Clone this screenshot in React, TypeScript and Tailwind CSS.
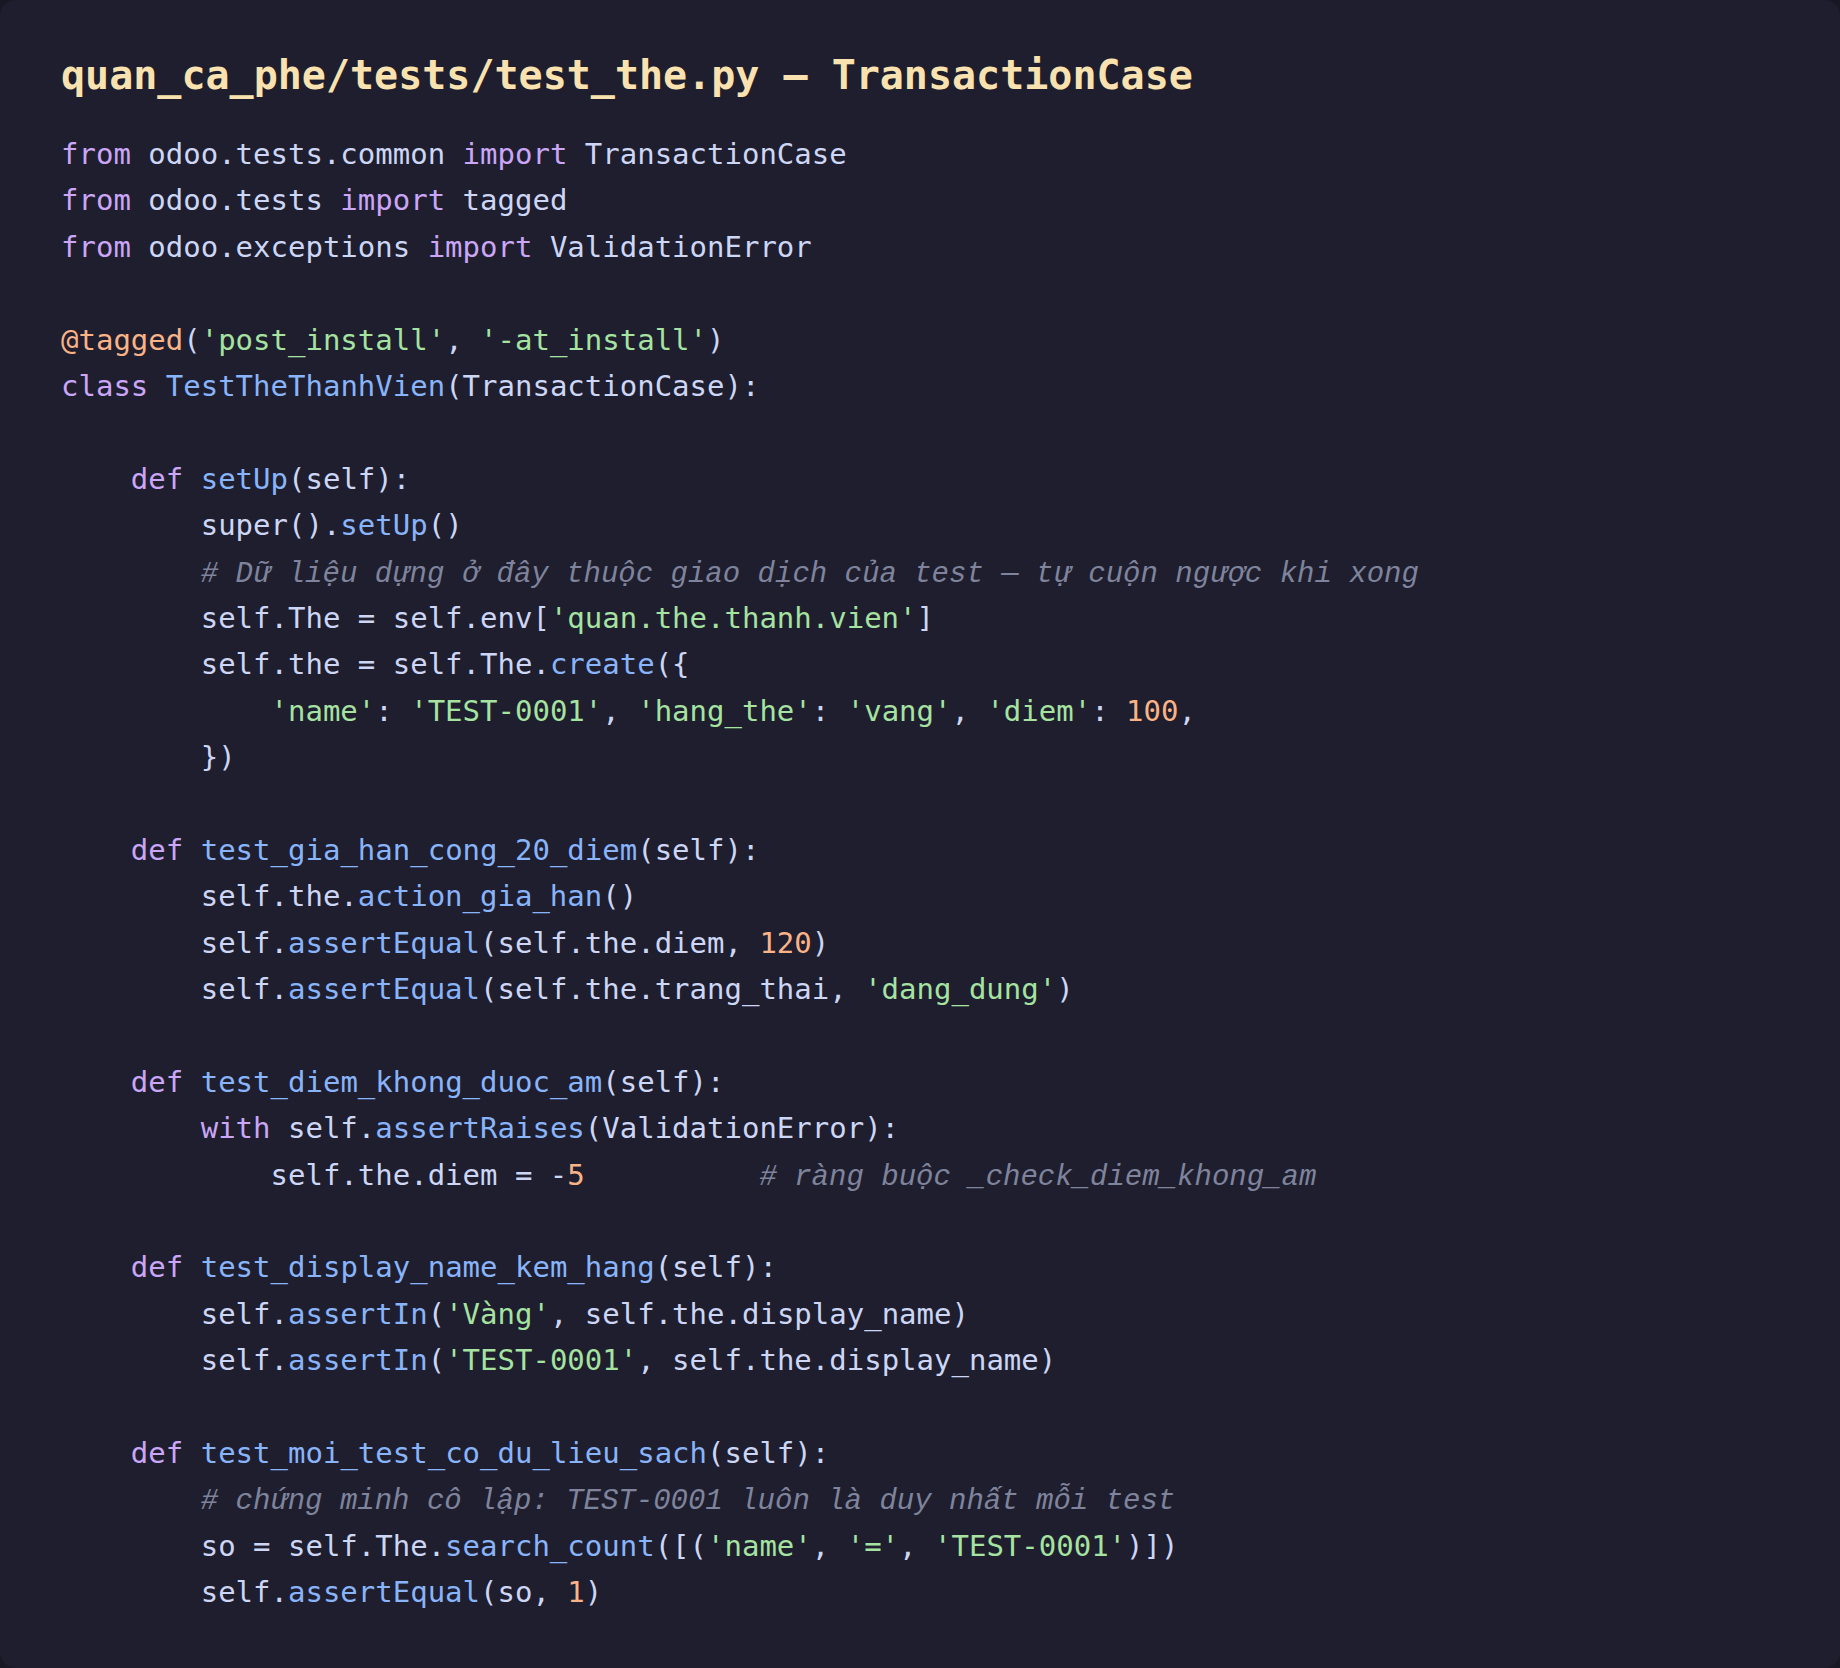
import type { ReactNode } from "react";

const K = ({ children }: { children: ReactNode }) => <span className="text-[#cba6f7]">{children}</span>;
const F = ({ children }: { children: ReactNode }) => <span className="text-[#89b4fa]">{children}</span>;
const S = ({ children }: { children: ReactNode }) => <span className="text-[#a6e3a1]">{children}</span>;
const N = ({ children }: { children: ReactNode }) => <span className="text-[#fab387]">{children}</span>;
const C = ({ children }: { children: ReactNode }) => (
  <span className="text-[#7f849c] italic font-['Liberation_Mono','DejaVu_Sans_Mono',monospace]">
    {typeof children === "string" ? children.normalize("NFC") : children}
  </span>
);

const lines: ReactNode[] = [
  <><K>from</K> odoo.tests.common <K>import</K> TransactionCase</>,
  <><K>from</K> odoo.tests <K>import</K> tagged</>,
  <><K>from</K> odoo.exceptions <K>import</K> ValidationError</>,
  "",
  <><N>@tagged</N>(<S>'post_install'</S>, <S>'-at_install'</S>)</>,
  <><K>class</K> <F>TestTheThanhVien</F>(TransactionCase):</>,
  "",
  <>    <K>def</K> <F>setUp</F>(self):</>,
  <>        super().<F>setUp</F>()</>,
  <>        <C># Dữ liệu dựng ở đây thuộc giao dịch của test — tự cuộn ngược khi xong</C></>,
  <>        self.The = self.env[<S>'quan.the.thanh.vien'</S>]</>,
  <>        self.the = self.The.<F>create</F>({"{"}</>,
  <>            <S>'name'</S>: <S>'TEST-0001'</S>, <S>'hang_the'</S>: <S>'vang'</S>, <S>'diem'</S>: <N>100</N>,</>,
  <>        {"})"}</>,
  "",
  <>    <K>def</K> <F>test_gia_han_cong_20_diem</F>(self):</>,
  <>        self.the.<F>action_gia_han</F>()</>,
  <>        self.<F>assertEqual</F>(self.the.diem, <N>120</N>)</>,
  <>        self.<F>assertEqual</F>(self.the.trang_thai, <S>'dang_dung'</S>)</>,
  "",
  <>    <K>def</K> <F>test_diem_khong_duoc_am</F>(self):</>,
  <>        <K>with</K> self.<F>assertRaises</F>(ValidationError):</>,
  <>            self.the.diem = -<N>5</N>          <C># ràng buộc _check_diem_khong_am</C></>,
  "",
  <>    <K>def</K> <F>test_display_name_kem_hang</F>(self):</>,
  <>        self.<F>assertIn</F>(<S>'Vàng'</S>, self.the.display_name)</>,
  <>        self.<F>assertIn</F>(<S>'TEST-0001'</S>, self.the.display_name)</>,
  "",
  <>    <K>def</K> <F>test_moi_test_co_du_lieu_sach</F>(self):</>,
  <>        <C># chứng minh cô lập: TEST-0001 luôn là duy nhất mỗi test</C></>,
  <>        so = self.The.<F>search_count</F>([(<S>'name'</S>, <S>'='</S>, <S>'TEST-0001'</S>)])</>,
  <>        self.<F>assertEqual</F>(so, <N>1</N>)</>,
];

export default function App() {
  return (
    <div className="w-[1840px] h-[1668px] bg-[#181825]">
      <div className="h-full rounded-2xl bg-[#1e1e2e] pl-[61px] pt-[51px] font-['DejaVu_Sans_Mono',monospace]">
        <h1 className="text-[40px] leading-[48px] font-bold text-[#f9e2af]">
          quan_ca_phe/tests/test_the.py — TransactionCase
        </h1>
        <pre className="mt-[32px] text-[29px] leading-[46.4px] text-[#cdd6f4] font-['DejaVu_Sans_Mono',monospace]">
          {lines.map((l, i) => (
            <div key={i} className="whitespace-pre h-[46.4px]">
              {l}
            </div>
          ))}
        </pre>
      </div>
    </div>
  );
}
